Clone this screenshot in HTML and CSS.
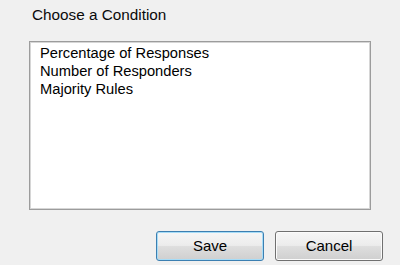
FILE: index.html
```html
<!DOCTYPE html>
<html>
<head>
<meta charset="utf-8">
<link rel="stylesheet" href="styles.css">
</head>
<body>
<div class="dialog">
  <div class="heading">Choose a Condition</div>
  <div class="listbox">
    <div class="item">Percentage of Responses</div>
    <div class="item">Number of Responders</div>
    <div class="item">Majority Rules</div>
  </div>
  <div class="buttons">
    <button class="btn btn-default">Save</button>
    <button class="btn">Cancel</button>
  </div>
</div>
</body>
</html>
```
FILE: styles.css
```css
html, body {
  margin: 0;
  padding: 0;
  background: #f0f0f0;
}
.dialog {
  width: 400px;
  height: 265px;
  font-family: "Liberation Sans", Arial, sans-serif;
  font-size: 15px;
  line-height: 18px;
  color: #000;
  display: flex;
  flex-direction: column;
  box-sizing: border-box;
  padding: 6px 0 0 0;
}
.heading {
  padding-left: 32px;
  margin-bottom: 17px;
  font-size: 15.3px;
  color: #0a0a0a;
}
.listbox {
  margin-left: 29px;
  width: 342px;
  height: 169px;
  box-sizing: border-box;
  background: #fff;
  border: 1px solid #9c9c9c;
  box-shadow: inset 0 0 0 1px #d6d6d6;
  padding: 2px 0 0 10px;
  font-size: 14.7px;
}
.item {
  height: 18px;
  white-space: nowrap;
}
.buttons {
  display: flex;
  gap: 11px;
  margin-top: 21px;
  margin-left: 156px;
}
.btn {
  width: 108px;
  height: 30px;
  box-sizing: border-box;
  border: 1px solid #707070;
  border-radius: 3px;
  background: linear-gradient(to bottom, #f6f6f6 0%, #ececec 48%, #dedede 52%, #cfcfcf 100%);
  font-family: "Liberation Sans", Arial, sans-serif;
  font-size: 15px;
  color: #000;
  padding: 0 0 1px 0;
  margin: 0;
  box-shadow: inset 0 0 0 1px #fbfbfb;
}
.btn-default {
  border-color: #3c7fb1;
  box-shadow: inset 0 0 0 1px #a6dcf7;
}
```
